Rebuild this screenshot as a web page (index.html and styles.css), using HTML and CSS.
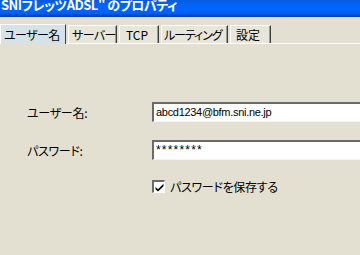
FILE: index.html
```html
<!DOCTYPE html>
<html lang="ja">
<head>
<meta charset="utf-8">
<link rel="stylesheet" href="styles.css">
</head>
<body>
<div class="window">
  <div class="titlebar"><span class="title">SNIフレッツADSL" のプロパティ</span></div>
  <div class="tabs">
    <div class="tab active">ユーザー名</div>
    <div class="tab">サーバー</div>
    <div class="tab">TCP</div>
    <div class="tab">ルーティング</div>
    <div class="tab">設定</div>
  </div>
  <div class="panel">
    <div class="row">
      <span class="label">ユーザー名:</span>
      <div class="field">abcd1234@bfm.sni.ne.jp</div>
    </div>
    <div class="row">
      <span class="label">パスワード:</span>
      <div class="field pw">********</div>
    </div>
    <div class="row check-row">
      <span class="label"></span>
      <div class="check">
        <span class="box"><svg width="9" height="9" viewBox="0 0 9 9"><path d="M0.5 4 L3 6.2 L8.5 0.8 L8.5 3.2 L3 8.5 L0.5 6.2 Z" fill="#000"/></svg></span>
        <span class="check-label">パスワードを保存する</span>
      </div>
    </div>
  </div>
</div>
</body>
</html>
```
FILE: styles.css
```css
html, body {
  margin: 0;
  padding: 0;
  background: #e3dfd1;
  overflow: hidden;
}
.window {
  width: 360px;
  height: 255px;
  font-family: "Noto Sans CJK JP", "Liberation Sans", sans-serif;
  font-feature-settings: "palt";
  color: #000;
}
.titlebar {
  height: 17px;
  overflow: hidden;
  background: linear-gradient(to bottom, #0a5ad8 0px, #0062f8 4px, #0064ff 10px, #005cf0 14px, #0046c8 15px, #0040b8 17px);
}
.title {
  display: block;
  margin-top: -5px;
  margin-left: 1px;
  color: #fff;
  font-weight: bold;
  font-size: 13px;
  line-height: 20px;
  white-space: nowrap;
  letter-spacing: -0.5px;
}
.tabs {
  display: flex;
  align-items: flex-end;
  margin-top: 6px;
  height: 20px;
  border-bottom: 1px solid #ffffff;
}
.tab {
  box-sizing: border-box;
  height: 18px;
  padding: 0 0 0 3px;
  font-size: 12px;
  line-height: 17px;
  letter-spacing: -0.6px;
  background: #e8e5da;
  border-top: 1px solid #ffffff;
  border-left: 1px solid #ffffff;
  border-right: 1px solid #404040;
  box-shadow: inset -1px 0 0 #9a9890;
  margin-left: 2px;
  white-space: nowrap;
}
.tab.active {
  height: 20px;
  margin-left: 0;
  width: 66px;
  padding-left: 3px;
  line-height: 19px;
  background: #d7e2e8;
  border-right: 1px solid #404040;
  box-shadow: none;
  margin-bottom: -1px;
}
.tab:nth-child(2) { width: 49px; }
.tab:nth-child(3) { width: 40px; padding-left: 6px; letter-spacing: 0; }
.tab:nth-child(4) { width: 67px; padding-left: 2px; letter-spacing: -1.1px; }
.tab:nth-child(5) { width: 41px; padding-left: 5px; letter-spacing: 0; }
.panel {
  padding-top: 58px;
}
.row {
  display: grid;
  grid-template-columns: 152px 1fr;
  align-items: center;
  height: 20px;
  margin-bottom: 18px;
}
.label {
  padding-left: 27px;
  font-size: 12px;
  letter-spacing: -0.3px;
}
.field {
  box-sizing: border-box;
  height: 20px;
  width: 220px;
  background: #fff;
  border-top: 2px solid #6a6a6a;
  border-left: 2px solid #6a6a6a;
  border-bottom: 1px solid #f4f4f0;
  font-family: "Liberation Sans", sans-serif;
  font-size: 11px;
  line-height: 17px;
  padding-left: 2px;
  letter-spacing: -0.3px;
  white-space: nowrap;
}
.field.pw {
  letter-spacing: 1.2px;
  font-size: 12px;
}
.check-row {
  height: 13px;
}
.check {
  display: flex;
  align-items: center;
}
.box {
  box-sizing: border-box;
  width: 13px;
  height: 13px;
  background: #fff;
  border-top: 2px solid #6a6a6a;
  border-left: 2px solid #6a6a6a;
  border-bottom: 1px solid #fff;
  border-right: 1px solid #fff;
  display: flex;
  align-items: center;
  justify-content: center;
}
.check-label {
  margin-left: 5px;
  font-size: 12px;
  letter-spacing: -0.3px;
}
```
